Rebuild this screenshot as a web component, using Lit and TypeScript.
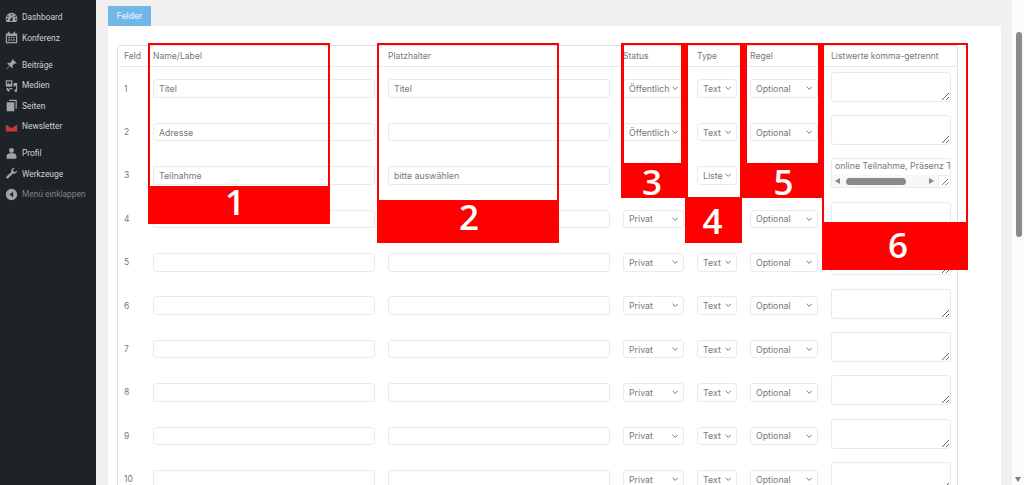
import { LitElement, html, css, svg } from "lit";
import { customElement } from "lit/decorators.js";

type Row = { n: number; name: string; ph: string; status: string; type: string; list?: boolean };

const ROWS: Row[] = [
  { n: 1, name: "Titel", ph: "Titel", status: "Öffentlich", type: "Text" },
  { n: 2, name: "Adresse", ph: "", status: "Öffentlich", type: "Text" },
  { n: 3, name: "Teilnahme", ph: "bitte auswählen", status: "Öffentlich", type: "Liste", list: true },
  ...[4, 5, 6, 7, 8, 9, 10].map((n) => ({ n, name: "", ph: "", status: "Privat", type: "Text" })),
];

const ICONS: Record<string, unknown> = {
  gauge: svg`<path fill-rule="evenodd" d="M8 2.200a7.200 7.200 0 0 0-7.200 7.200c0 1.500.5 2.900 1.300 4h11.800a7.200 7.200 0 0 0 1.300-4A7.200 7.200 0 0 0 8 2.200zM8 3.600a1 1 0 1 1 0 2 1 1 0 0 1 0-2zM3.600 5.400a1 1 0 1 1 0 2 1 1 0 0 1 0-2zm8.800 0a1 1 0 1 1 0 2 1 1 0 0 1 0-2zM2.700 9a1 1 0 1 1 0 2 1 1 0 0 1 0-2zm10.600 0a1 1 0 1 1 0 2 1 1 0 0 1 0-2zM10.600 6 8.900 9.900a1.600 1.600 0 1 1-1.500-.6z"/>`,
  calendar: svg`<path fill-rule="evenodd" d="M3.500 1h2v2h5V1h2v2H15v12H1V3h2.500zM2.500 6v7.500h11V6zM4 7h2v2H4zm3 0h2v2H7zm3 0h2v2h-2zm-6 3h2v2H4zm3 0h2v2H7zm3 0h2v2h-2z"/>`,
  pin: svg`<path d="M9.500 1.500 14.500 6.500l-1.300.6-1.200-.6-2.700 2.700.4 2.300-1.100 1.100-2.700-2.700L2 14l-.5-.5 4-3.900-2.700-2.700 1.100-1.100 2.300.4L8.900 3l-.6-1.200z"/>`,
  media: svg`<path fill-rule="evenodd" d="M1 1.500h8v8H1zM2.500 3v3.500l1.800-1.800 1.700 1.700 1-1 .5.500V3zM10.500 5H15v9.300a1.700 1.700 0 1 1-1.400-1.600V8.500l-3.100.8zM2 11h2v1.300a1.600 1.600 0 1 1-1.300 1.600l-.7 0zM5.500 11H9v1.500H5.500z"/>`,
  page: svg`<path d="M5 1h9.500v11H13V2.500H5zM2 4h9.500v11H2z"/>`,
  mail: svg`<path d="M1 5.500 8 10l7-4.500V14H1z"/>`,
  user: svg`<circle cx="8" cy="4.300" r="3"/><path d="M5.500 7.800h5c2.500.4 3.500 2 3.500 3.700V14.500H2v-3c0-1.700 1-3.300 3.500-3.700z"/>`,
  wrench: svg`<path d="M15 4.300a3.900 3.900 0 0 1-5.200 3.700L4 13.700a1.500 1.500 0 0 1-2.200-2.100L7.700 6A3.900 3.900 0 0 1 12 1.100L9.800 3.400l.8 2 2 .7z"/>`,
  collapse: svg`<path fill-rule="evenodd" d="M8 1a7 7 0 1 1 0 14A7 7 0 0 1 8 1zm2 3.500L5.500 8l4.500 3.500z"/>`,
};

const MENU: { icon: string; label: string; tone?: string }[][] = [
  [
    { icon: "gauge", label: "Dashboard" },
    { icon: "calendar", label: "Konferenz" },
  ],
  [
    { icon: "pin", label: "Beiträge" },
    { icon: "media", label: "Medien" },
    { icon: "page", label: "Seiten" },
    { icon: "mail", label: "Newsletter", tone: "red" },
  ],
  [
    { icon: "user", label: "Profil" },
    { icon: "wrench", label: "Werkzeuge" },
    { icon: "collapse", label: "Menü einklappen", tone: "dim" },
  ],
];

const MARKS = [
  { n: 1, x: 148, w: 182, h: 181, band: 38.5, l: 2, r: 2, dx: -4, dy: -3 },
  { n: 2, x: 377, w: 182, h: 200, band: 43, l: 2, r: 2, dx: 1, dy: -5 },
  { n: 3, x: 621, w: 64, h: 155, band: 35, l: 3, r: 4, dx: -1, dy: 1 },
  { n: 4, x: 685, w: 57, h: 200, band: 46, l: 3, r: 2, dx: -1, dy: 0 },
  { n: 5, x: 742, w: 81, h: 155, band: 35, l: 5, r: 5, dx: 1, dy: 1 },
  { n: 6, x: 822, w: 146, h: 227, band: 48, l: 2, r: 2, dx: 3, dy: -2 },
];

@customElement("app-root")
export class AppRoot extends LitElement {
  static styles = css`
    :host {
      display: flex;
      position: relative;
      width: 1024px;
      height: 485px;
      overflow: hidden;
      background: #f0f0f1;
      font-family: Inter, "Liberation Sans", sans-serif;
      color: #74787c;
    }
    .side {
      flex: 0 0 96px;
      background: #1d2327;
      padding-top: 7px;
      box-sizing: border-box;
      font-family: Roboto, "Noto Sans", sans-serif;
    }
    .group {
      margin-bottom: 6.8px;
    }
    .item {
      display: flex;
      align-items: center;
      height: 20.45px;
      padding-left: 5px;
      font-size: 8.4px;
      font-weight: 400;
      color: #d0d2d4;
      gap: 4px;
      white-space: nowrap;
    }
    .item svg {
      width: 13px;
      height: 13px;
      fill: #9ea3a8;
      flex: none;
    }
    .item.red svg {
      fill: #c23b3b;
    }
    .item.dim {
      color: #7d8388;
    }
    .main {
      flex: 1;
      min-width: 0;
      padding: 5.5px 11px 0 12px;
    }
    .tab {
      display: flex;
      align-items: center;
      justify-content: center;
      width: 43px;
      height: 20.5px;
      background: #70b7e8;
      color: #e9f4fb;
      font-size: 8.6px;
      font-weight: 500;
    }
    .card {
      background: #fff;
      padding: 19px 43px 0 9px;
      height: 480px;
      box-sizing: border-box;
    }
    .table {
      border: 1px solid #dfe0e2;
      border-radius: 4px;
      border-bottom: 0;
    }
    .row {
      display: grid;
      grid-template-columns: 22px 222px 222px 61px 40px 68px 120px;
      column-gap: 13px;
      align-items: center;
      height: 43.4px;
      font-size: 8.5px;
    }
    .head {
      height: 20px;
      border-bottom: 1px solid #e8e9ea;
      box-sizing: content-box;
      font-size: 8.6px;
      color: #74787c;
      white-space: nowrap;
    }
    .head > div:first-child,
    .num {
      padding-left: 6px;
    }
    .field {
      box-sizing: border-box;
      height: 18.5px;
      border: 1px solid #e9eaeb;
      border-radius: 3px;
      background: #fff;
      display: flex;
      align-items: center;
      padding: 0 5px;
      font-size: 8.8px;
      color: #74787c;
      white-space: nowrap;
    }
    .select {
      justify-content: space-between;
      padding-right: 5px;
    }
    .select svg {
      width: 6.5px;
      height: 4.5px;
      fill: none;
      stroke: #666;
      stroke-width: 1;
      flex: none;
    }
    .area {
      box-sizing: border-box;
      display: block;
      height: 30px;
      width: 120px;
      margin: 0 0 4px;
      border: 1px solid #e9eaeb;
      border-radius: 3px;
      background: #fff;
    }
    textarea.area {
      padding: 0;
      outline: none;
    }
    .list {
      display: flex;
      flex-direction: column;
      overflow: hidden;
      font-size: 8.8px;
      white-space: nowrap;
      color: #74787c;
    }
    .list .text {
      height: 17px;
      line-height: 14px;
      padding-left: 3px;
      overflow: hidden;
    }
    .bar {
      flex: 1;
      display: flex;
      align-items: center;
      background: #f7f7f7;
    }
    .bar .arrow {
      width: 0;
      height: 0;
      border: 3.5px solid transparent;
    }
    .bar .left {
      border-right: 5px solid #8a8a8a;
      border-left-width: 0;
      margin-left: 3px;
    }
    .bar .thumb {
      width: 60px;
      height: 6.5px;
      border-radius: 4px;
      background: #8a8a8a;
      margin: 0 23px 0 6px;
    }
    .bar .right {
      border-left: 5px solid #8a8a8a;
      border-right-width: 0;
    }
    .bar .grip {
      margin-left: auto;
      width: 11px;
      height: 11px;
      background: #fff;
      border-left: 1px solid #e9eaeb;
      border-top: 1px solid #e9eaeb;
      display: flex;
    }
    .grip svg {
      width: 11px;
      height: 11px;
      stroke: #777;
      stroke-width: 1;
      fill: none;
    }
    .scroll {
      flex: 0 0 12px;
      background: #fbfbfb;
      position: relative;
    }
    .scroll .thumb {
      position: absolute;
      left: 3.5px;
      top: 32px;
      width: 6.5px;
      height: 205px;
      border-radius: 4px;
      background: #8a8a8a;
    }
    .scroll .down {
      position: absolute;
      left: 3px;
      top: 477px;
      width: 0;
      height: 0;
      border: 3.5px solid transparent;
      border-top: 5px solid #7f7f7f;
      border-bottom: 0;
    }
    .mark {
      position: absolute;
      top: 43px;
      box-sizing: border-box;
      border: 2px solid #ff0000;
      border-bottom: 0;
      display: flex;
      flex-direction: column;
      justify-content: flex-end;
      pointer-events: none;
    }
    .mark .band {
      background: #ff0000;
      color: #fff;
      font-family: "Open Sans", "Noto Sans", sans-serif;
      font-size: 35px;
      font-weight: 600;
      line-height: 1;
      display: flex;
      align-items: center;
      justify-content: center;
    }
    .mark .digit {
      display: block;
    }
  `;

  private chevron() {
    return html`<svg viewBox="0 0 7 5"><path d="M.6.9 3.5 3.8 6.4.9" /></svg>`;
  }

  private select(v: string) {
    return html`<div class="field select"><span>${v}</span>${this.chevron()}</div>`;
  }

  private row(r: Row) {
    return html`<div class="row">
      <div class="num">${r.n}</div>
      <div class="field">${r.name}</div>
      <div class="field">${r.ph}</div>
      ${this.select(r.status)} ${this.select(r.type)} ${this.select("Optional")}
      ${r.list
        ? html`<div class="area list">
            <div class="text">online Teilnahme, Präsenz Teilnahme</div>
            <div class="bar">
              <span class="arrow left"></span><span class="thumb"></span><span class="arrow right"></span>
              <span class="grip"
                ><svg viewBox="0 0 11 11"><path d="M3 9 9 3M6.5 9.5 9.5 6.5" /></svg></span
              >
            </div>
          </div>`
        : html`<textarea class="area"></textarea>`}
    </div>`;
  }

  render() {
    return html`
      <nav class="side">
        ${MENU.map(
          (g) => html`<div class="group">
            ${g.map(
              (m) => html`<div class="item ${m.tone ?? ""}">
                <svg viewBox="0 0 16 16">${ICONS[m.icon]}</svg><span>${m.label}</span>
              </div>`
            )}
          </div>`
        )}
      </nav>
      <main class="main">
        <div class="tab">Felder</div>
        <section class="card">
          <div class="table">
            <div class="row head">
              <div>Feld</div>
              <div>Name/Label</div>
              <div>Platzhalter</div>
              <div>Status</div>
              <div>Type</div>
              <div>Regel</div>
              <div>Listwerte komma-getrennt</div>
            </div>
            ${ROWS.map((r) => this.row(r))}
          </div>
        </section>
      </main>
      <div class="scroll"><span class="thumb"></span><span class="down"></span></div>
      ${MARKS.map(
        (m) => html`<div
          class="mark"
          style="left:${m.x}px;width:${m.w}px;height:${m.h}px;border-left-width:${m.l}px;border-right-width:${m.r}px"
        >
          <div class="band" style="height:${m.band}px;margin:0 ${-m.r}px 0 ${-m.l}px">
            <span class="digit" style="transform:translate(${m.dx}px,${m.dy}px)">${m.n}</span>
          </div>
        </div>`
      )}
    `;
  }
}
